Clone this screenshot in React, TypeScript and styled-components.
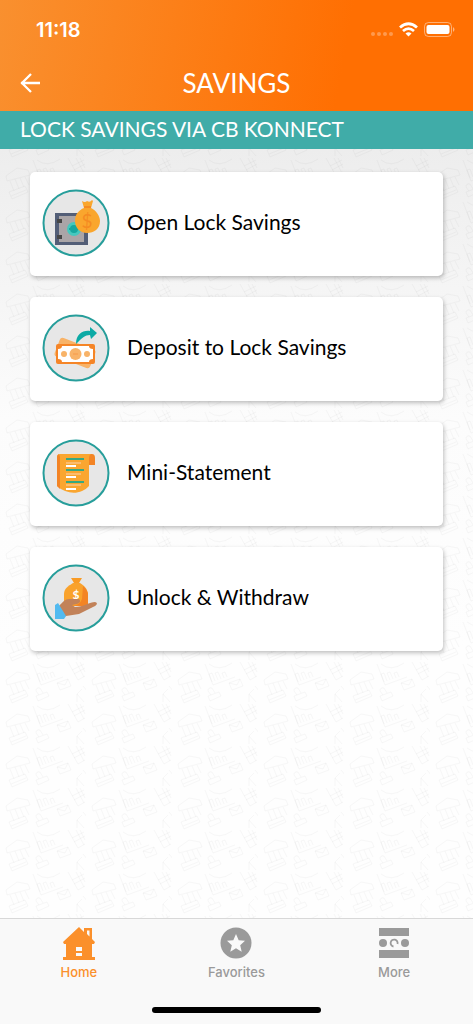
import React from "react";
import styled, { createGlobalStyle } from "styled-components";

const GlobalStyle = createGlobalStyle`
  *, *::before, *::after { box-sizing: border-box; }
  body { margin: 0; font-family: Lato, "Noto Sans", sans-serif; background: #fdfdfd; }
`;

const Screen = styled.div`
  min-height: 100vh;
  display: flex;
  flex-direction: column;
`;

const Header = styled.header`
  background: linear-gradient(100deg, #f9902f 0%, #ff6f02 72%);
  color: #fff;
`;

const StatusBar = styled.div`
  display: flex;
  align-items: center;
  justify-content: space-between;
  height: 54px;
  padding: 5px 17px 0 36px;
`;

const Time = styled.time`
  font: 600 20px/24px Inter, sans-serif;
`;

const TitleBar = styled.div`
  display: grid;
  grid-template-columns: 60px 1fr 60px;
  align-items: center;
  height: 57px;
`;

const BackButton = styled.button`
  display: flex;
  justify-content: center;
  padding: 0;
  border: 0;
  background: none;
  color: inherit;
`;

const Title = styled.h1`
  margin: 0;
  text-align: center;
  font-size: 26px;
  line-height: 32px;
  font-weight: 400;
`;

const Banner = styled.h2`
  margin: 0;
  padding: 2px 20px 4px;
  background: #40aca8;
  color: #fff;
  font-size: 21px;
  line-height: 32px;
  font-weight: 400;
`;

const Content = styled.main`
  position: relative;
  flex: 1;
  padding: 23px 30px;
  background: linear-gradient(#ededed 0px, #f4f4f4 120px, #fcfcfc 270px, #fefefe 500px);
`;

const Backdrop = styled.svg`
  position: absolute;
  inset: 0;
  width: 100%;
  height: 100%;
`;

const Menu = styled.ul`
  position: relative;
  display: grid;
  gap: 21px;
  margin: 0;
  padding: 0;
  list-style: none;
`;

const Card = styled.button`
  display: flex;
  align-items: center;
  gap: 17px;
  width: 100%;
  height: 104px;
  padding: 0 12px 2px;
  border: 0;
  border-radius: 5px;
  background: #fff;
  box-shadow: 1px 2px 4px rgba(0, 0, 0, 0.25);
  color: #000;
  font: 400 21px/28px Lato, sans-serif;
  text-align: left;
`;

const CardLabel = styled.span`
  padding-bottom: 2px;
`;

const TabBar = styled.nav`
  background: #f9f9f9;
  border-top: 1px solid #d8d8d8;
`;

const Tabs = styled.div`
  display: grid;
  grid-template-columns: repeat(3, 1fr);
`;

const Tab = styled.a<{ $active?: boolean }>`
  display: flex;
  flex-direction: column;
  align-items: center;
  gap: 2px;
  padding-top: 7px;
  color: ${(p) => (p.$active ? "#fb902b" : "#9a9a9a")};
  font: 500 13px/18px Inter, sans-serif;
  text-decoration: none;
`;

const HomeIndicator = styled.div`
  width: 169px;
  height: 6px;
  margin: 26px auto 11px;
  border-radius: 3px;
  background: #000;
`;

function BankingPattern() {
  return (
    <Backdrop aria-hidden="true">
      <defs>
        <pattern id="banking" width="86" height="42" patternUnits="userSpaceOnUse" y="9">
          <g fill="none" stroke="#000" strokeOpacity="0.028" strokeWidth="1">
            <path d="M6 18 17 10l11 2 2 5-23 6zM10 23l4 10M15 21l4 10M20 20l4 9M25 19l4 8" />
            <path d="m9 34 16-6 3 6-16 7zM11 38l15-6" />
            <path d="m33 2 8 21 22-8M40 20l-3-8 3-1 3 8M46 18l-3-7 3-1 3 7M52 16l-2-5 3-1 2 5M37 2q10 8 23-1" />
            <path d="m57 21 11-4 3 7-11 4zM57 21l8 2 3-6" />
            <path d="m36 34 11-4 2 4-11 5zM39 33l-3-4q0-4 4-3l3 5" />
            <path d="m68 0 10 18 7-4M72 8l12-6M74 12l11-6M76 0l8 15M80 0l5 10M77 40v-8l7 8M77 32l5-5M83 24l5 6" />
          </g>
        </pattern>
      </defs>
      <rect width="100%" height="100%" fill="url(#banking)" />
    </Backdrop>
  );
}

function Badge({ children }: { children: React.ReactNode }) {
  return (
    <svg width="68" height="68" viewBox="0 0 68 68" aria-hidden="true">
      <circle cx="34" cy="34" r="32.500" fill="#e7e7e7" stroke="#279e9b" strokeWidth="2" />
      {children}
    </svg>
  );
}

const SafeIcon = () => (
  <Badge>
    <path d="M13 24h33v32H13z" fill="#535e77" />
    <path d="M17 27h25v26H17z" fill="#aaa5a7" />
    <path d="M15 30h5v4h-5zM15 46h5v4h-5z" fill="#464646" />
    <circle cx="32" cy="40" r="7" fill="#45c8be" />
    <path d="M32 36a4 4 0 1 1 0 8 4 4 0 0 1 0-8zM27 39h11v2H27z" fill="#17a79f" />
    <path d="M40 12q3 2 5 0 3 2 5-1l1 1-2 7c5 2 9 8 9 13 0 8-6 12-13 12s-12-5-12-12 4-11 9-13z" fill="#faa62d" />
    <path d="M42 18h7" stroke="#f58b22" strokeWidth="2" />
    <text x="45" y="39" textAnchor="middle" fontFamily="Lato" fontSize="19" fill="#f58b22">$</text>
  </Badge>
);

const DepositIcon = () => (
  <Badge>
    <rect x="14" y="29" width="38" height="20" rx="3" fill="#f8b368" transform="rotate(21 33 39)" />
    <rect x="14" y="30" width="39" height="20" rx="2" fill="#f58527" />
    <path d="M20 32h27q0 3 4 3v10q-4 0-4 3H20q0-3-4-3V35q4 0 4-3z" fill="#fff" />
    <circle cx="33.500" cy="40" r="6" fill="#f8b368" />
    <circle cx="22" cy="40" r="3" fill="#f8b368" />
    <circle cx="45" cy="40" r="3" fill="#f8b368" />
    <path d="M31 40h5" stroke="#f79a48" strokeWidth="1" />
    <path d="M34 30c0-10 7-14 14-13v-4l7 6-6 6-1-4c-5 0-8 3-14 9z" fill="#0caaa5" />
  </Badge>
);

const StatementIcon = () => (
  <Badge>
    <path d="M46 15h4q3 0 3 4v7h-6z" fill="#f38425" />
    <path d="M18 15h31q-2 1-2 4v28c-8 9-22 9-32 0V18q0-3 3-3z" fill="#faa630" />
    <path d="M17 15q-2 1-2 3v29l3 3V18z" fill="#f38425" />
    <path d="M24 20h18M24 31h18M24 43h18" stroke="#36a881" strokeWidth="2" />
    <path d="M24 24h15M24 35h15M24 46h15" stroke="#fbbd6f" strokeWidth="2" />
    <path d="M24 27h10M24 38h10M24 50h10" stroke="#fff" strokeWidth="2" />
  </Badge>
);

const WithdrawIcon = () => (
  <Badge>
    <path d="M29 14h11l-3 5h-5z" fill="#f99b25" />
    <path d="M31 19h7c5 3 8 7 8 12v9q0 2-3 2H26q-4 0-4-4v-8c0-5 4-8 9-11z" fill="#f9a22c" />
    <path d="M41 22q5 4 5 9v9q0 2-3 2H30q8-1 10-7z" fill="#f38424" />
    <text x="34" y="35" textAnchor="middle" fontFamily="Lato" fontWeight="700" fontSize="12" fill="#fff">$</text>
    <path d="M17 42c4-4 6-7 10-7h10q3 3-2 5l-5 1 3 2c8 0 15-5 20-5 4 1 1 4-2 5l-14 7-13 2-6 3z" fill="#c28259" />
    <path d="m13 41 3-2 8 13-2 3h-9z" fill="#52baf0" />
  </Badge>
);

const items = [
  { label: "Open Lock Savings", Icon: SafeIcon },
  { label: "Deposit to Lock Savings", Icon: DepositIcon },
  { label: "Mini-Statement", Icon: StatementIcon },
  { label: "Unlock & Withdraw", Icon: WithdrawIcon },
];

export default function App() {
  return (
    <Screen>
      <GlobalStyle />
      <Header>
        <StatusBar>
          <Time>11:18</Time>
          <svg width="86" height="16" viewBox="0 0 86 16" aria-hidden="true">
            <g fill="#fff" fillOpacity="0.3">
              <circle cx="3" cy="12" r="2" />
              <circle cx="9" cy="12" r="2" />
              <circle cx="15" cy="12" r="2" />
              <circle cx="21" cy="12" r="2" />
            </g>
            <g fill="none" stroke="#fff" strokeWidth="2.800">
              <path d="M30 5.500q8.500-7.500 17 0M33 9q5.500-4.700 11 0" />
            </g>
            <path d="M35.500 11.600q3-2.500 6 0l-3 3z" fill="#fff" />
            <rect x="54.500" y="0.500" width="27" height="14" rx="4" fill="none" stroke="#fff" strokeOpacity="0.450" />
            <rect x="56.500" y="3" width="23" height="9" rx="2" fill="#fff" />
            <path d="M83 5q3 2.500 0 5z" fill="#fff" fillOpacity="0.500" />
          </svg>
        </StatusBar>
        <TitleBar>
          <BackButton aria-label="Back">
            <svg width="24" height="24" viewBox="0 0 24 24" fill="none" stroke="#fff" strokeWidth="2.300">
              <path d="M22 12H3M13 3l-9 9 9 9" />
            </svg>
          </BackButton>
          <Title>SAVINGS</Title>
        </TitleBar>
      </Header>
      <Banner>LOCK SAVINGS VIA CB KONNECT</Banner>
      <Content>
        <BankingPattern />
        <Menu>
          {items.map(({ label, Icon }) => (
            <li key={label}>
              <Card>
                <Icon />
                <CardLabel>{label}</CardLabel>
              </Card>
            </li>
          ))}
        </Menu>
      </Content>
      <TabBar>
        <Tabs>
          <Tab href="#home" $active aria-current="page">
            <svg width="34" height="35" viewBox="0 0 34 35" aria-hidden="true">
              <path fillRule="evenodd" fill="currentColor" d="M17 1 1 16l1 2h2v13H1v3h32v-3h-3V18h2l1-2-3-3V2h-8v4zM25 4.500h2.500v6L25 8zM14 21h6v4h-6zM14 27h6v3h-6z" />
            </svg>
            Home
          </Tab>
          <Tab href="#favorites">
            <svg width="34" height="35" viewBox="0 0 34 35" aria-hidden="true">
              <circle cx="17" cy="17" r="15.500" fill="currentColor" />
              <path d="m17 8 2.700 6.200 6.300.6-4.800 4.400 1.500 6.600-5.700-3.500-5.700 3.500 1.500-6.600L8 14.800l6.300-.6z" fill="#f9f9f9" />
            </svg>
            Favorites
          </Tab>
          <Tab href="#more">
            <svg width="34" height="35" viewBox="0 0 34 35" aria-hidden="true">
              <path d="M2 2h30v8H2zM2 24h30v8H2z" fill="currentColor" />
              <circle cx="6" cy="17" r="4" fill="currentColor" />
              <circle cx="28" cy="17" r="4" fill="currentColor" />
              <path d="M20.500 18a3.500 3.500 0 1 0-4 2.500" fill="none" stroke="currentColor" strokeWidth="1.800" />
            </svg>
            More
          </Tab>
        </Tabs>
        <HomeIndicator />
      </TabBar>
    </Screen>
  );
}
